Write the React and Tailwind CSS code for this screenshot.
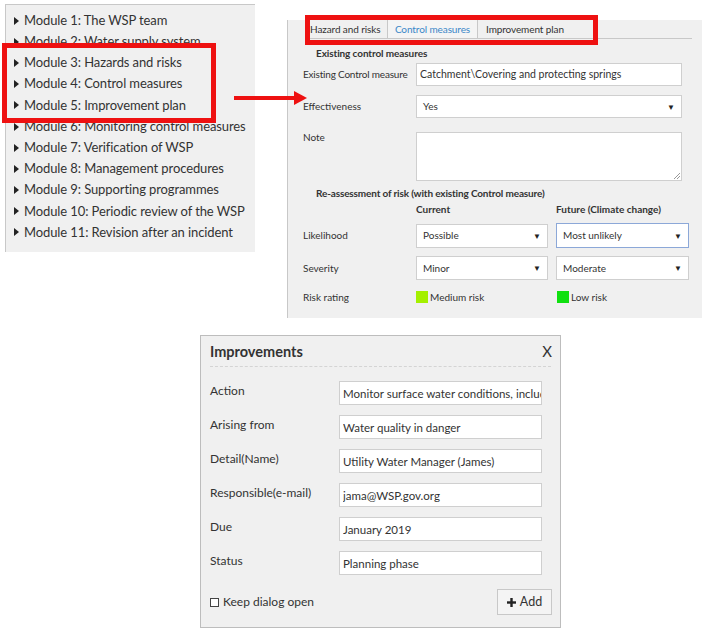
import React from 'react';

const modules = [
  'Module 1: The WSP team',
  'Module 2: Water supply system',
  'Module 3: Hazards and risks',
  'Module 4: Control measures',
  'Module 5: Improvement plan',
  'Module 6: Monitoring control measures',
  'Module 7: Verification of WSP',
  'Module 8: Management procedures',
  'Module 9: Supporting programmes',
  'Module 10: Periodic review of the WSP',
  'Module 11: Revision after an incident',
];

const improvements = [
  ['Action', 'Monitor surface water conditions, including'],
  ['Arising from', 'Water quality in danger'],
  ['Detail(Name)', 'Utility Water Manager (James)'],
  ['Responsible(e-mail)', 'jama@WSP.gov.org'],
  ['Due', 'January 2019'],
  ['Status', 'Planning phase'],
];

const font = { fontFamily: 'Lato, "Open Sans", sans-serif' };

const Caret = () => (
  <svg width="5" height="8" viewBox="0 0 5 8" className="shrink-0">
    <polygon points="0,0 5,4 0,8" fill="#222" />
  </svg>
);

const Select = ({ value, className = '' }) => (
  <div className={`flex items-center justify-between bg-white border border-[#cfcfcf] pl-[6px] pr-[6px] text-[10px] text-[#333] ${className}`}>
    <span>{value}</span>
    <span className="text-[8px] text-[#222]">▼</span>
  </div>
);

const ModuleList = () => (
  <div className="absolute left-[5px] top-[4px] w-[250px] h-[248px] bg-[#f0f0f0] border-l border-t border-[#c8c8c8] pt-[5px]">
    {modules.map((m) => (
      <div key={m} className="flex items-center h-[21.2px] pl-[8px] gap-[5px] text-[13px] tracking-[-0.1px] text-[#333] whitespace-nowrap">
        <Caret />
        <span>{m}</span>
      </div>
    ))}
  </div>
);

const ControlPanel = () => (
  <div className="absolute left-[287px] top-[20px] w-[415px] h-[298px] bg-[#f0f0f0] border-l border-[#c8c8c8] text-[10px] text-[#333] whitespace-nowrap">
    <div className="flex ml-[17px] mr-[10px] h-[19px] border-b border-[#c8c8c8] text-[10px] tracking-[-0.1px]">
      <div className="w-[83px] pl-[5px] border-r border-[#c8c8c8] leading-[18px]">Hazard and risks</div>
      <div className="w-[90px] text-center border-r border-[#c8c8c8] leading-[18px] text-[#3a87c8] bg-[#f4f4f4]">Control measures</div>
      <div className="pl-[8px] leading-[18px]">Improvement plan</div>
    </div>
    <div className="ml-[28px] mt-[7px] h-[14px] leading-[14px] font-bold tracking-[-0.1px]">Existing control measures</div>

    <div className="flex items-center mt-[3px] h-[23px]">
      <div className="w-[128px] pl-[15px] tracking-[-0.2px]">Existing Control measure</div>
      <div className="w-[266px] h-[23px] bg-white border border-[#cfcfcf] pl-[3px] flex items-center text-[10.5px]">
        Catchment\Covering and protecting springs
      </div>
    </div>

    <div className="flex items-center mt-[9px] h-[23px]">
      <div className="w-[128px] pl-[15px]">Effectiveness</div>
      <Select value="Yes" className="w-[266px] h-[23px]" />
    </div>

    <div className="flex mt-[14px] h-[49px]">
      <div className="w-[128px] pl-[15px] leading-[10px]">Note</div>
      <div className="w-[266px] h-[49px] bg-white border border-[#cfcfcf] relative">
        <svg width="7" height="7" viewBox="0 0 7 7" className="absolute right-[1px] bottom-[1px]">
          <line x1="1" y1="7" x2="7" y2="1" stroke="#999" />
          <line x1="4" y1="7" x2="7" y2="4" stroke="#999" />
        </svg>
      </div>
    </div>

    <div className="ml-[28px] mt-[5px] h-[14px] leading-[14px] font-bold tracking-[-0.15px]">Re-assessment of risk (with existing Control measure)</div>
    <div className="flex mt-[2px] h-[14px] leading-[14px] font-bold">
      <div className="w-[128px]" />
      <div className="w-[140px]">Current</div>
      <div>Future (Climate change)</div>
    </div>

    <div className="flex items-center mt-[7px] h-[25px]">
      <div className="w-[128px] pl-[15px]">Likelihood</div>
      <Select value="Possible" className="w-[132px] h-[24px]" />
      <Select value="Most unlikely" className="w-[133px] h-[25px] ml-[8px] !border-[#8ca8d8]" />
    </div>

    <div className="flex items-center mt-[8px] h-[24px]">
      <div className="w-[128px] pl-[15px]">Severity</div>
      <Select value="Minor" className="w-[132px] h-[24px]" />
      <Select value="Moderate" className="w-[133px] h-[24px] ml-[8px]" />
    </div>

    <div className="flex items-center mt-[5px] h-[24px]">
      <div className="w-[128px] pl-[15px]">Risk rating</div>
      <div className="w-[140px] flex items-center gap-[2px]">
        <span className="w-[12px] h-[12px] bg-[#a4f000]" />
        <span>Medium risk</span>
      </div>
      <div className="flex items-center gap-[2px] ml-[1px]">
        <span className="w-[12px] h-[12px] bg-[#10e010]" />
        <span>Low risk</span>
      </div>
    </div>
  </div>
);

const ImprovementsDialog = () => (
  <div className="absolute left-[200px] top-[335px] w-[361px] h-[293px] bg-[#f0f0f0] border border-[#bdbdbd] px-[9px] text-[12px] text-[#333]">
    <div className="flex items-center justify-between h-[30px] mt-[1px] border-b border-dashed border-[#d4d4d4]">
      <span className="text-[14.5px] font-bold">Improvements</span>
      <span className="text-[15px] mr-[-1px]">X</span>
    </div>
    <div className="pt-[14px] flex flex-col gap-[10px]">
      {improvements.map(([label, value]) => (
        <div key={label} className="flex h-[24px]">
          <div className="w-[129px] leading-[20px]">{label}</div>
          <input
            readOnly
            value={value}
            style={font}
            className="w-[203px] h-[24px] bg-white border border-[#cfcfcf] pl-[3px] text-[11.5px] text-[#333] outline-none"
          />
        </div>
      ))}
    </div>
    <div className="flex items-center justify-between mt-[14px]">
      <div className="flex items-center gap-[4px]">
        <span className="w-[9px] h-[9px] border border-[#444] bg-white" />
        <span className="text-[12px]">Keep dialog open</span>
      </div>
      <div className="w-[55px] h-[26px] border border-[#c8c8c8] bg-[#f4f4f4] flex items-center justify-center gap-[4px] text-[12.5px] mr-[-1px]">
        <svg width="9" height="9" viewBox="0 0 9 9">
          <rect x="3.3" y="0" width="2.4" height="9" fill="#222" />
          <rect x="0" y="3.3" width="9" height="2.4" fill="#222" />
        </svg>
        <span>Add</span>
      </div>
    </div>
  </div>
);

const Overlays = () => (
  <>
    <div className="absolute left-[2px] top-[43px] w-[214px] h-[80px] border-[5px] border-[#ee1111]" />
    <div className="absolute left-[305px] top-[15px] w-[293px] h-[30px] border-[5px] border-[#ee1111]" />
    <svg className="absolute left-[234px] top-[90px]" width="76" height="18" viewBox="0 0 76 18">
      <rect x="0" y="6" width="62" height="4" fill="#ee1111" />
      <polygon points="60,1 73,8 60,15" fill="#ee1111" />
    </svg>
  </>
);

export default function App() {
  return (
    <div className="relative w-[704px] h-[632px] bg-white overflow-hidden" style={font}>
      <ModuleList />
      <ControlPanel />
      <ImprovementsDialog />
      <Overlays />
    </div>
  );
}
